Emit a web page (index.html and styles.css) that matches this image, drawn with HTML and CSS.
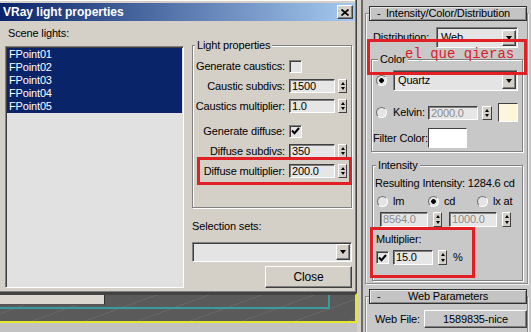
FILE: index.html
```html
<!DOCTYPE html>
<html lang="es">
<head>
  <meta charset="UTF-8">
  <title>VRay light properties</title>
  <link rel="stylesheet" href="styles.css">
</head>
<body>

<div class="screen">
  <div class="left">
    <div class="dialog">
      <div class="titlebar">
        <span class="title">VRay light properties</span>
        <span class="title-close">
          <svg width="8" height="7" viewBox="0 0 8 7"><path d="M0.5 0.5 L7.5 6.5 M7.5 0.5 L0.5 6.5" stroke="#000" stroke-width="1.7"/></svg>
        </span>
      </div>

      <div class="dlg-body">
        <div class="col-lights">
          <div class="lbl">Scene lights:</div>
          <div class="listbox">
            <div class="item">FPoint01</div>
            <div class="item">FPoint02</div>
            <div class="item">FPoint03</div>
            <div class="item">FPoint04</div>
            <div class="item">FPoint05</div>
          </div>
        </div>

        <div class="col-props">
          <fieldset class="group props">
            <legend>Light properties</legend>
            <div class="prow"><span class="plbl">Generate caustics:</span><span class="check"></span></div>
            <div class="prow"><span class="plbl">Caustic subdivs:</span><span class="field">1500</span><span class="spin"></span></div>
            <div class="prow"><span class="plbl">Caustics multiplier:</span><span class="field">1.0</span><span class="spin"></span></div>
            <div class="prow gap"><span class="plbl">Generate diffuse:</span><span class="check"><svg width="9" height="8" viewBox="0 0 9 8"><path d="M1 3.5 L3.5 6.2 L8 1" fill="none" stroke="#000" stroke-width="2"/></svg></span></div>
            <div class="prow"><span class="plbl">Diffuse subdivs:</span><span class="field">350</span><span class="spin"></span></div>
            <div class="prow"><span class="plbl">Diffuse multiplier:</span><span class="field">200.0</span><span class="spin"></span><span class="mark mark-diffuse"></span></div>
          </fieldset>

          <div class="lbl sel-lbl">Selection sets:</div>
          <div class="combo sel-combo"><span class="combo-text"></span><span class="combo-btn"></span></div>
          <div class="btn close-btn">Close</div>
        </div>
      </div>
    </div>

    <!-- viewport behind the dialog -->
    <div class="viewport">
      <div class="vp-scene">
        <div class="vp-teal"><div class="vp-bar"></div></div>
      </div>
      <div class="vp-bottom"></div>
    </div>
  </div>

  <div class="panel">
    <div class="rollout">
      <div class="roll-head"><span class="minus">-</span>Intensity/Color/Distribution</div>

      <div class="dist-row">
        <span class="dist-lbl">Distribution:</span>
        <div class="combo dist-combo"><span class="combo-text">Web</span><span class="combo-btn"></span></div>
      </div>

      <fieldset class="group pgroup color-group">
        <legend>Color</legend>
        <div class="quartz-row">
          <span class="radio on"></span>
          <div class="combo quartz-combo"><span class="combo-text">Quartz</span><span class="combo-btn"></span></div>
        </div>
        <div class="kelvin-row">
          <span class="radio"></span>
          <span class="kelvin-lbl">Kelvin:</span>
          <span class="field off kelvin-field">2000.0</span>
          <span class="spin kelvin-spin"></span>
          <span class="swatch cream"></span>
        </div>
        <div class="filter-row">
          <span class="filter-lbl">Filter Color:</span>
          <span class="swatch white"></span>
        </div>
      </fieldset>

      <fieldset class="group pgroup int-group">
        <legend>Intensity</legend>
        <div class="res-row">Resulting Intensity: 1284.6 cd</div>
        <div class="radio-row">
          <span class="rcell c1"><span class="radio"></span>lm</span>
          <span class="rcell c2"><span class="radio on"></span>cd</span>
          <span class="rcell"><span class="radio"></span>lx at</span>
        </div>
        <div class="unit-row">
          <span class="field off unit-field">8564.0</span>
          <span class="spin unit-spin"></span>
          <span class="field off unit-field second">1000.0</span>
          <span class="spin unit-spin"></span>
        </div>
        <div class="mult-lbl">Multiplier:</div>
        <div class="mult-row">
          <span class="check"><svg width="9" height="8" viewBox="0 0 9 8"><path d="M1 3.5 L3.5 6.2 L8 1" fill="none" stroke="#000" stroke-width="2"/></svg></span>
          <span class="field mult-field">15.0</span>
          <span class="spin mult-spin"></span>
          <span class="pct">%</span>
        </div>
      </fieldset>

      <div class="mark mark-color"><span class="note">el que qieras</span></div>
      <div class="mark mark-mult"></div>
    </div>

    <div class="rollout web">
      <div class="roll-head"><span class="minus">-</span>Web Parameters</div>
      <div class="web-row">
        <span class="web-lbl">Web File:</span>
        <div class="btn web-btn">1589835-nice</div>
      </div>
    </div>
  </div>
</div>

</body>
</html>
```

FILE: styles.css
```css
* {
  box-sizing: border-box;
}

body {
  margin: 0;
  width: 531px;
  height: 332px;
  overflow: hidden;
  background: #d4d0c8;
  font: 11px/13px "Liberation Sans", Arial, sans-serif;
  letter-spacing: -0.15px;
  white-space: nowrap;
  color: #000;
}

.screen {
  display: flex;
  height: 332px;
  overflow: hidden;
}

.left {
  width: 361px;
  display: flex;
  flex-direction: column;
}

/* dialog */

.dialog {
  width: 357px;
  height: 293px;
  padding-top: 3px;
  background: #d4d0c8;
  border-right: 1px solid #404040;
  border-bottom: 1px solid #404040;
  box-shadow: inset -1px -1px 0 #808080, inset 0 1px 0 #fff;
}

.titlebar {
  height: 18px;
  margin-right: 1px;
  padding: 0 2px 0 3px;
  display: flex;
  align-items: center;
  justify-content: space-between;
  background: linear-gradient(90deg, #0a246a, #a6caf0);
}

.title {
  color: #fff;
  font-weight: bold;
  font-size: 12px;
  letter-spacing: 0;
}

.title-close {
  width: 16px;
  height: 14px;
  display: flex;
  align-items: center;
  justify-content: center;
  background: #d4d0c8;
  border: 1px solid;
  border-color: #fff #404040 #404040 #fff;
  box-shadow: inset -1px -1px 0 #808080;
}

.dlg-body {
  display: flex;
  padding-left: 5px;
}

.col-lights {
  width: 179px;
}

.lbl {
  margin-top: 6px;
  padding-left: 3px;
}

.listbox {
  margin-top: 6px;
  height: 242px;
  padding: 1px 1px 0 1px;
  background: #e1e1e1;
  border: 1px solid;
  border-color: #808080 #fff #fff #808080;
  box-shadow: inset 1px 1px 0 #404040;
}

.item {
  height: 13px;
  padding-left: 2px;
  background: #0a246a;
  color: #fff;
  line-height: 13px;
}

.col-props {
  width: 162px;
  margin-left: 6px;
  display: flex;
  flex-direction: column;
}

.group {
  min-width: 0;
  margin: 0;
  padding: 0;
  border: 1px solid #808080;
  box-shadow: inset 1px 1px 0 #fff, 1px 1px 0 #fff;
}

.group legend {
  padding: 0 2px;
  line-height: 13px;
  background: #d4d0c8;
}

.props {
  margin: 18px 0 0 2px;
  width: 160px;
  padding: 4px 0 26px 0;
}

.props legend {
  margin-left: 2px;
}

.prow {
  position: relative;
  height: 20px;
  display: flex;
  align-items: center;
}

.prow.gap {
  margin-top: 5px;
}

.plbl {
  width: 92px;
  margin-right: 4px;
  text-align: right;
}

.check {
  width: 13px;
  height: 13px;
  display: flex;
  align-items: center;
  justify-content: center;
  background: #e4e4e4;
  border: 1px solid;
  border-color: #808080 #fff #fff #808080;
  box-shadow: inset 1px 1px 0 #404040;
}

.field {
  width: 46px;
  height: 14px;
  padding-left: 2px;
  line-height: 12px;
  background: #e6e6e6;
  border: 1px solid;
  border-color: #404040 #fff #fff #404040;
  box-shadow: inset 1px 1px 0 #808080;
}

.field.off {
  color: #8a8a8a;
}

.spin {
  width: 9px;
  height: 14px;
  margin-left: 3px;
  display: flex;
  flex-direction: column;
  justify-content: space-evenly;
  align-items: center;
  background: #d4d0c8;
  border: 1px solid;
  border-color: #fff #404040 #404040 #fff;
}

.spin::before,
.spin::after {
  content: "";
  border-left: 2.5px solid transparent;
  border-right: 2.5px solid transparent;
}

.spin::before {
  border-bottom: 3px solid #000;
}

.spin::after {
  border-top: 3px solid #000;
}

.mark {
  position: absolute;
  border: 3px solid #e31f26;
}

.mark-diffuse {
  left: 4px;
  top: -4px;
  width: 155px;
  height: 28px;
}

.sel-lbl {
  margin-top: 12px;
  padding-left: 2px;
}

.combo {
  display: flex;
  align-items: center;
  justify-content: space-between;
  padding: 1px;
  background: #e4e4e4;
  border: 1px solid;
  border-color: #808080 #fff #fff #808080;
  box-shadow: inset 1px 1px 0 #404040;
}

.combo-text {
  padding-left: 3px;
}

.combo-btn {
  width: 14px;
  height: 16px;
  display: flex;
  align-items: center;
  justify-content: center;
  background: #d4d0c8;
  border: 1px solid;
  border-color: #fff #404040 #404040 #fff;
  box-shadow: inset -1px -1px 0 #808080;
}

.combo-btn::after {
  content: "";
  border-left: 3.5px solid transparent;
  border-right: 3.5px solid transparent;
  border-top: 4px solid #000;
}

.sel-combo {
  margin: 9px 0 0 2px;
  width: 160px;
  height: 20px;
}

.btn {
  display: flex;
  align-items: center;
  justify-content: center;
  background: #d4d0c8;
  border: 1px solid;
  border-color: #fff #404040 #404040 #fff;
  box-shadow: inset -1px -1px 0 #808080;
}

.close-btn {
  margin: 4px 0 0 auto;
  width: 87px;
  height: 22px;
  font-size: 12px;
}

/* viewport */

.viewport {
  width: 357px;
  flex: 1;
  display: flex;
  flex-direction: column;
}

.vp-scene {
  height: 30px;
  background: repeating-linear-gradient(160deg, #5a5a5a 0 17px, #666 17px 18px);
  border-top: 2px solid #444;
  border-right: 2px solid #e6e62c;
  border-bottom: 2px solid #e6e62c;
}

.vp-teal {
  width: 330px;
  height: 14px;
  border-right: 2px solid #3b9b9b;
  border-bottom: 2px solid #3b9b9b;
}

.vp-bar {
  width: 105px;
  height: 10px;
  background: #dcd8d0;
  border-right: 1px solid #303030;
  border-bottom: 1px solid #555;
}

.vp-bottom {
  flex: 1;
  background: #c2c2c2;
}

/* command panel */

.panel {
  width: 170px;
  background: #c8c8c8;
  border-left: 2px solid #6a6a6a;
}

.rollout {
  position: relative;
  margin: 13px 0 0 2px;
  width: 163px;
  border: 1px solid #8c8c8c;
  box-shadow: inset 1px 1px 0 #f0f0f0, 1px 1px 0 #f0f0f0;
}

.rollout.web {
  margin-top: 12px;
  height: 37px;
}

.roll-head {
  position: relative;
  margin: -8px 0 0 3px;
  width: 158px;
  height: 15px;
  line-height: 13px;
  text-align: center;
  background: #c4c4c4;
  border: 1px solid #303030;
  box-shadow: inset 1px 1px 0 #e8e8e8, inset -1px -1px 0 #888;
}

.minus {
  position: absolute;
  left: 7px;
}

.dist-row {
  margin-top: 6px;
  height: 21px;
  padding-left: 7px;
  display: flex;
  align-items: center;
}

.dist-lbl {
  width: 63px;
}

.dist-combo {
  width: 82px;
  height: 21px;
}

.pgroup legend {
  background: #c8c8c8;
}

.color-group {
  margin: 5px 4px 0 5px;
  padding: 4px 0 3px 0;
}

.color-group legend {
  margin-left: 6px;
}

.radio {
  width: 11px;
  height: 11px;
  border-radius: 50%;
  background: #e4e4e4;
  border: 1px solid;
  border-color: #707070 #fff #fff #707070;
}

.radio.on {
  background: radial-gradient(circle, #000 0 2px, #e4e4e4 2.6px);
}

.quartz-row {
  height: 21px;
  padding-left: 4px;
  display: flex;
  align-items: center;
}

.quartz-combo {
  margin-left: 6px;
  width: 125px;
  height: 21px;
}

.kelvin-row {
  margin-top: 12px;
  height: 19px;
  padding-left: 4px;
  display: flex;
  align-items: center;
}

.kelvin-lbl {
  width: 35px;
  margin-left: 6px;
}

.kelvin-field {
  width: 50px;
}

.kelvin-spin {
  margin-left: 4px;
  width: 10px;
}

.swatch {
  border: 1px solid;
  border-color: #404040 #fff #fff #404040;
}

.swatch.cream {
  margin-left: 6px;
  width: 20px;
  height: 19px;
  background: #fdf5dc;
}

.filter-row {
  margin-top: 6px;
  height: 20px;
  padding-left: 1px;
  display: flex;
  align-items: center;
}

.filter-lbl {
  width: 55px;
}

.swatch.white {
  width: 39px;
  height: 20px;
  background: #fff;
}

.int-group {
  margin: 7px 4px 2px 6px;
  padding: 4px 0 15px 0;
}

.int-group legend {
  margin-left: 3px;
}

.res-row {
  height: 14px;
  line-height: 14px;
  padding-left: 2px;
}

.radio-row {
  margin-top: 4px;
  height: 14px;
  padding-left: 4px;
  display: flex;
  align-items: center;
}

.rcell {
  display: flex;
  align-items: center;
  gap: 5px;
}

.rcell.c1 {
  width: 51px;
}

.rcell.c2 {
  width: 49px;
}

.unit-row {
  margin-top: 4px;
  height: 15px;
  padding-left: 7px;
  display: flex;
  align-items: center;
}

.unit-field {
  width: 48px;
  height: 15px;
}

.unit-field.second {
  margin-left: 7px;
}

.unit-spin {
  margin-left: 5px;
  height: 15px;
}

.mult-lbl {
  margin-top: 5px;
  height: 14px;
  line-height: 14px;
  padding-left: 3px;
}

.mult-row {
  margin-top: 4px;
  height: 15px;
  padding-left: 3px;
  display: flex;
  align-items: center;
}

.mult-field {
  margin-left: 4px;
  width: 40px;
  height: 15px;
}

.mult-spin {
  margin-left: 5px;
  height: 15px;
}

.pct {
  margin-left: 6px;
}

.mark-color {
  left: 1px;
  top: 25px;
  width: 160px;
  height: 36px;
  padding: 4px 0 0 35px;
}

.note {
  font: 14px/16px "Liberation Mono", "Courier New", monospace;
  letter-spacing: 0;
  color: #d8202c;
}

.mark-mult {
  left: 4px;
  top: 213px;
  width: 105px;
  height: 51px;
}

.web-row {
  margin-top: 6px;
  padding-left: 9px;
  display: flex;
  align-items: center;
}

.web-lbl {
  width: 49px;
}

.web-btn {
  width: 103px;
  height: 18px;
  background: #c8c8c8;
}
```
